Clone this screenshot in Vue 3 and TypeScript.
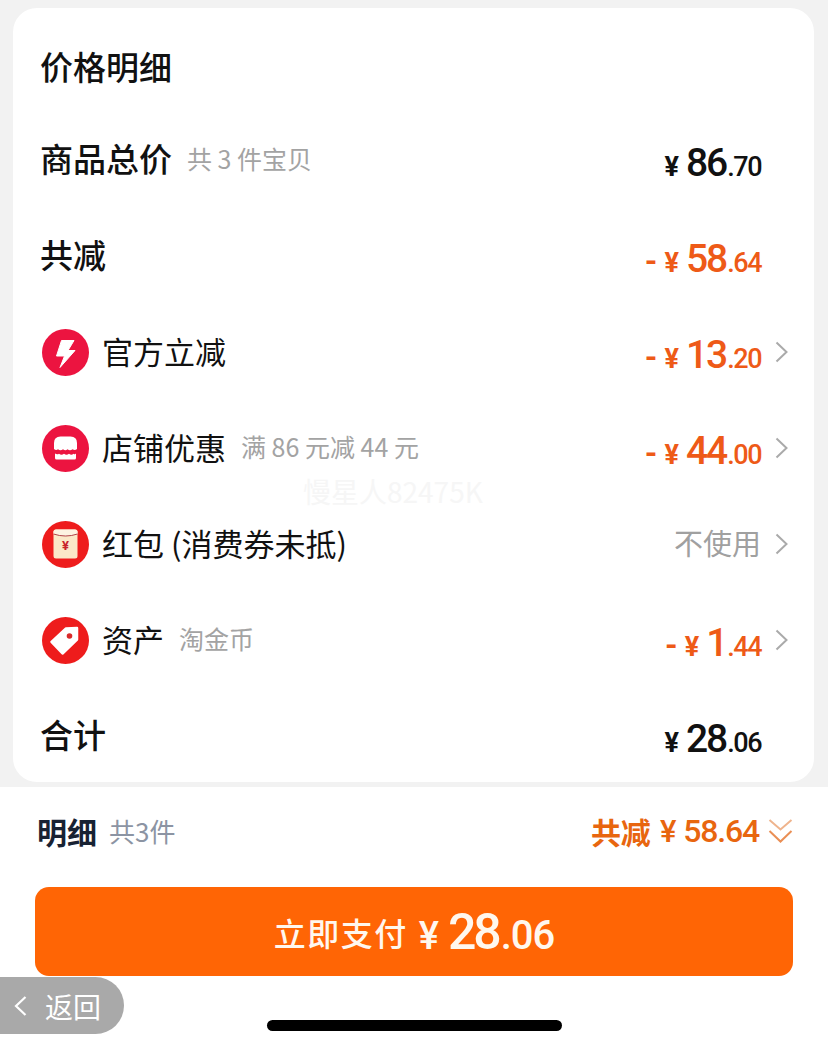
<script setup lang="ts">
interface Row {
  label: string
  note?: string
  icon?: string
  strong?: boolean
  sign?: boolean
  int?: string
  dec?: string
  tone?: string
  plain?: string
  arrow?: boolean
}
const rows: Row[] = [
  { label: '商品总价', note: '共 3 件宝贝', strong: true, int: '86', dec: '.70', tone: 'dark' },
  { label: '共减', strong: true, sign: true, int: '58', dec: '.64', tone: 'hot' },
  { label: '官方立减', icon: 'bolt', sign: true, int: '13', dec: '.20', tone: 'hot', arrow: true },
  { label: '店铺优惠', note: '满 86 元减 44 元', icon: 'shop', sign: true, int: '44', dec: '.00', tone: 'hot', arrow: true },
  { label: '红包 (消费券未抵)', icon: 'packet', plain: '不使用', arrow: true },
  { label: '资产', note: '淘金币', icon: 'tag', sign: true, int: '1', dec: '.44', tone: 'hot', arrow: true },
  { label: '合计', strong: true, int: '28', dec: '.06', tone: 'dark' }
]
</script>

<template>
  <div class="page">
    <section class="card">
      <h1 class="title">价格明细</h1>
      <div v-for="row in rows" :key="row.label" class="row">
        <div class="left">
          <svg v-if="row.icon" class="icon" viewBox="0 0 47 47">
            <template v-if="row.icon === 'bolt'">
              <circle cx="23.5" cy="23.5" r="23.5" fill="#ec1440" />
              <path d="M19.5 11.5H32L26 21.5H33L18 38.5L22.5 27H14.5Z" fill="#fff" stroke="#fff" stroke-width="1" stroke-linejoin="round" />
            </template>
            <template v-else-if="row.icon === 'shop'">
              <circle cx="23.5" cy="23.5" r="23.5" fill="#ec1440" />
              <path d="M12 24V18Q12 11.5 18.5 11.5H28.5Q35 11.5 35 18V24Q33 26 30.500 24.300Q28 26 25.500 24.300Q23.500 26 21 24.300Q18.500 26 16 24.300Q14 26 12 24Z" fill="#fff" />
              <path d="M13 28.500Q15 30 17 28.800Q19.500 30.500 22 28.800Q24.500 30.500 27 28.800Q29.500 30.500 31.500 28.800Q33 30 34 28.500V33Q34 34.500 32.500 34.500H14.500Q13 34.500 13 33Z" fill="#fff" />
            </template>
            <template v-else-if="row.icon === 'packet'">
              <circle cx="23.500" cy="23.500" r="23.500" fill="#ee1c1c" />
              <rect x="11.500" y="8.500" width="24" height="29" rx="2.500" fill="#fbe8c8" />
              <path d="M11.500 10.500Q11.500 8.500 14 8.500H33Q35.500 8.500 35.500 10.500V13Q23.500 17 11.500 13Z" fill="#fdf3e2" />
              <path d="M11.500 13Q23.500 17 35.500 13" fill="none" stroke="#a8303a" stroke-width="0.900" />
              <text x="23.500" y="28.500" class="packet-yen">¥</text>
            </template>
            <template v-else>
              <circle cx="23.500" cy="23.500" r="23.500" fill="#ee1c1c" />
              <path d="M35 11L24 11.500L9.500 25L20.500 36.500L35 22.500Z" fill="#fff" stroke="#fff" stroke-width="2.500" stroke-linejoin="round" />
              <circle cx="27.500" cy="19" r="2.800" fill="#d92a2a" />
            </template>
          </svg>
          <span class="label" :class="{ strong: row.strong }">{{ row.label }}</span>
          <span v-if="row.note" class="note">{{ row.note }}</span>
        </div>
        <div class="right">
          <span v-if="row.plain" class="plain">{{ row.plain }}</span>
          <span v-else class="amount" :class="row.tone">
            <span v-if="row.sign" class="minus">-</span>
            <span class="yen">¥</span>
            <span class="int">{{ row.int }}</span>
            <span class="dec">{{ row.dec }}</span>
          </span>
          <span class="arrow-slot">
            <svg v-if="row.arrow" class="arrow" viewBox="0 0 13 22">
              <path d="M1.500 1.500L11.500 11L1.500 20.500" fill="none" stroke="#aaaaaa" stroke-width="2" />
            </svg>
          </span>
        </div>
      </div>
      <span class="watermark">慢星人82475K</span>
    </section>

    <footer class="footer">
      <div class="summary">
        <div class="sum-left">
          <span class="sum-title">明细</span>
          <span class="sum-count">共3件</span>
        </div>
        <div class="sum-right">
          <span class="sum-label">共减</span>
          <span class="sum-yen">¥</span>
          <span class="sum-num">58.64</span>
          <svg class="double" viewBox="0 0 25 26">
            <path d="M1.500 2L12.500 11.500L23.500 2" fill="none" stroke="#efb48d" stroke-width="2" />
            <path d="M1.500 13L12.500 23.500L23.500 13" fill="none" stroke="#ea8f55" stroke-width="2" />
          </svg>
        </div>
      </div>
      <button class="pay" type="button">
        <span class="pay-text">立即支付</span>
        <span class="pay-yen">¥</span>
        <span class="pay-int">28</span>
        <span class="pay-dec">.06</span>
      </button>
      <div class="home"></div>
    </footer>

    <div class="back">
      <svg class="back-arrow" viewBox="0 0 13 22">
        <path d="M11.500 2L2 11L11.500 20" fill="none" stroke="#fff" stroke-width="2.200" />
      </svg>
      <span>返回</span>
    </div>
  </div>
</template>

<style scoped>
.page {
  position: relative;
  width: 828px;
  height: 1048px;
  overflow: hidden;
  background: #f2f2f2;
  display: flex;
  flex-direction: column;
  font-family: "Noto Sans CJK SC", "Noto Sans", sans-serif;
  color: #111;
}
.card {
  position: relative;
  margin: 8px 14px 0 13px;
  height: 774px;
  box-sizing: border-box;
  padding: 0 26px 0 27px;
  background: #fff;
  border-radius: 24px;
}
.title {
  margin: 0;
  height: 104px;
  display: flex;
  align-items: center;
  font-size: 33px;
  font-weight: 500;
  line-height: 1;
  padding-top: 12px;
  box-sizing: border-box;
}
.row {
  height: 96px;
  display: flex;
  align-items: center;
  justify-content: space-between;
}
.left, .right {
  display: flex;
  align-items: center;
}
.icon {
  width: 47px;
  height: 47px;
  margin: 0 13px 0 2px;
  flex: none;
}
.packet-yen {
  font-family: "Roboto", sans-serif;
  font-size: 13px;
  font-weight: 700;
  fill: #c8232c;
  text-anchor: middle;
}
.label {
  font-size: 31px;
  line-height: 1;
  margin-bottom: 4px;
}
.label.strong {
  font-size: 33px;
  font-weight: 500;
}
.note {
  margin-left: 15px;
  margin-bottom: 4px;
  font-size: 25px;
  line-height: 1;
  color: #a3a3a3;
}
.amount {
  display: flex;
  align-items: baseline;
  font-family: "Roboto", sans-serif;
  font-weight: 500;
  line-height: 1;
  padding-top: 7px;
}
.amount.dark { color: #111; }
.amount.hot { color: #ee5a17; }
.minus {
  font-size: 32px;
  font-weight: 700;
  margin-right: 7px;
}
.yen {
  font-size: 27px;
  font-weight: 700;
  margin-right: 7px;
}
.int {
  font-size: 39px;
  letter-spacing: -2px;
}
.dec {
  font-size: 27px;
  letter-spacing: -1.5px;
  margin-left: 1px;
}
.plain {
  font-size: 29px;
  line-height: 1;
  margin-bottom: 4px;
  color: #a0a0a0;
}
.arrow-slot {
  width: 13px;
  height: 22px;
  margin-left: 14px;
}
.arrow {
  display: block;
  width: 13px;
  height: 22px;
}
.watermark {
  position: absolute;
  left: 290px;
  top: 469px;
  font-size: 28px;
  line-height: 1;
  color: #f6f6f6;
}
.footer {
  margin-top: 5px;
  flex: 1;
  background: #fff;
  padding: 0 35px;
  display: flex;
  flex-direction: column;
}
.summary {
  height: 90px;
  padding: 0 0 2px 2px;
  box-sizing: border-box;
  display: flex;
  align-items: center;
  justify-content: space-between;
}
.sum-left, .sum-right {
  display: flex;
  align-items: center;
}
.sum-title {
  font-size: 30px;
  font-weight: 700;
  line-height: 1;
  color: #182233;
}
.sum-count {
  margin-left: 12px;
  font-size: 26px;
  line-height: 1;
  color: #8c94a3;
}
.sum-right {
  color: #e8660f;
}
.sum-label {
  font-size: 30px;
  font-weight: 700;
  line-height: 1;
}
.sum-yen, .sum-num {
  font-family: "Roboto", sans-serif;
  font-weight: 500;
  line-height: 1;
}
.sum-yen {
  margin-left: 9px;
  font-size: 31px;
}
.sum-num {
  margin-left: 7px;
  font-size: 32px;
  letter-spacing: -1.2px;
}
.double {
  width: 25px;
  height: 26px;
  margin-left: 9px;
}
.pay {
  width: 100%;
  height: 89px;
  margin-top: 10px;
  border: 0;
  border-radius: 14px;
  background: #ff6505;
  color: #fff7ee;
  display: flex;
  align-items: baseline;
  justify-content: center;
  padding: 20px 0 0;
  font-family: "Roboto", sans-serif;
  font-weight: 500;
  line-height: 1;
}
.pay-text {
  align-self: center;
  margin-bottom: 20px;
  font-family: "Noto Sans CJK SC", sans-serif;
  font-weight: 500;
  font-size: 32px;
  letter-spacing: 1.500px;
}
.pay-yen {
  font-size: 38px;
  margin-left: 11px;
}
.pay-int {
  margin-left: 9px;
  font-size: 50px;
  letter-spacing: -3px;
}
.pay-dec {
  font-size: 40px;
  letter-spacing: -1px;
  margin-left: 2px;
}
.home {
  width: 295px;
  height: 11px;
  margin: 44px 0 0 232px;
  border-radius: 6px;
  background: #000;
}
.back {
  position: absolute;
  left: 0;
  top: 977px;
  width: 124px;
  height: 57px;
  box-sizing: border-box;
  padding-left: 14px;
  display: flex;
  align-items: center;
  gap: 18px;
  background: #a9a9a9;
  border-radius: 0 29px 29px 0;
  color: #fff;
  font-size: 28px;
  line-height: 1;
}
.back-arrow {
  width: 13px;
  height: 22px;
  flex: none;
}
</style>
